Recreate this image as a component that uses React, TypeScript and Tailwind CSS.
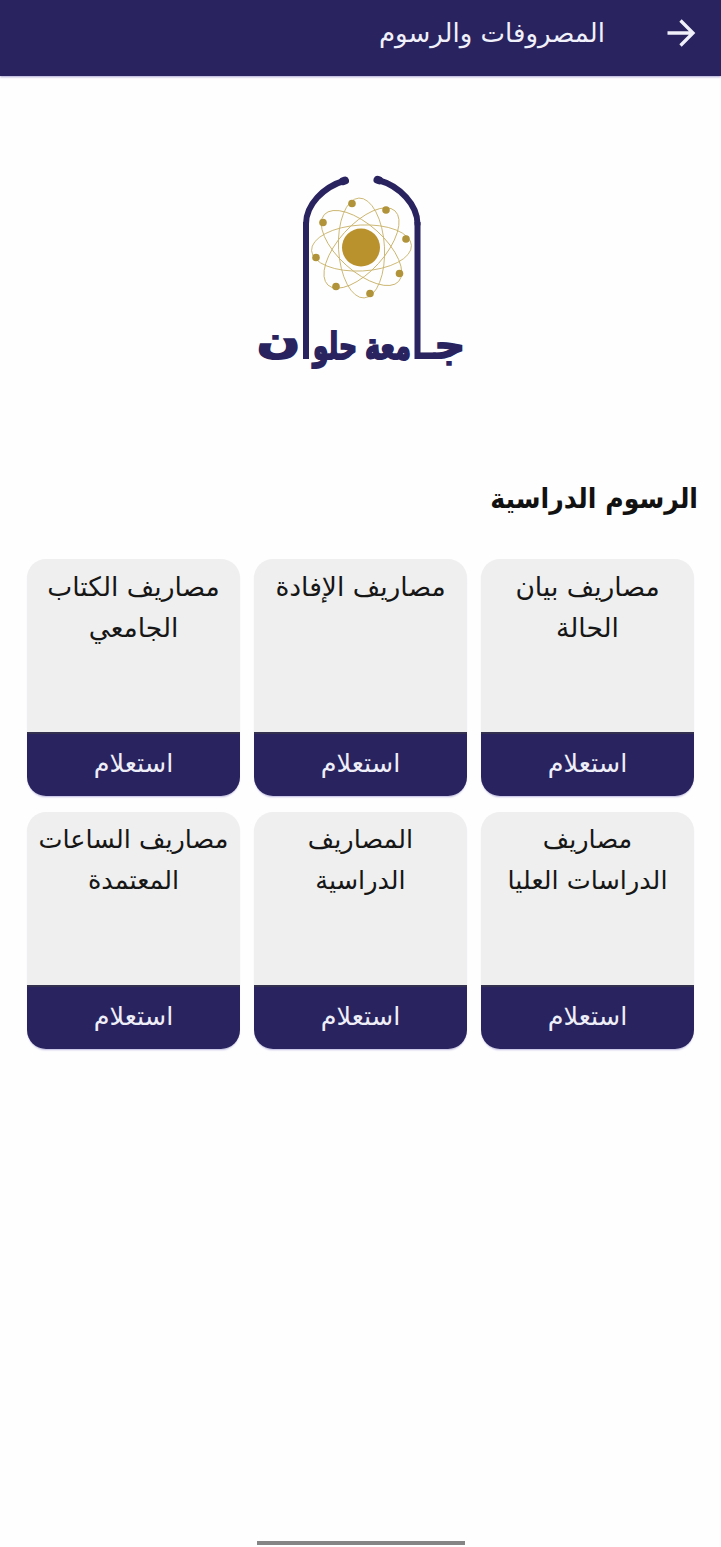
const fees = [
  { lines: ['مصاريف بيان', 'الحالة'], size: 'text-[26.5px]' },
  { lines: ['مصاريف الإفادة'], size: 'text-[26.5px]' },
  { lines: ['مصاريف الكتاب', 'الجامعي'], size: 'text-[26.5px]' },
  { lines: ['مصاريف', 'الدراسات العليا'], size: 'text-[25.5px]' },
  { lines: ['المصاريف', 'الدراسية'], size: 'text-[25.5px]' },
  { lines: ['مصاريف الساعات', 'المعتمدة'], size: 'text-[25.5px]' },
];

const electrons = [
  [352, 203.5], [386, 210], [406, 239], [399.5, 273.5],
  [370, 293.5], [336, 286.5], [316, 257.5], [323, 222.5],
];

// The two legs of the arch stand for the alifs between these groups.
const wordmark = [
  { text: 'جـ', right: 465, width: 45, y: 358 },
  { text: 'معة', right: 411, width: 46, y: 359 },
  { text: 'حلو', right: 357, width: 44, y: 359 },
  { text: 'ن', right: 300, width: 43, y: 353 },
];

function Logo() {
  return (
    <svg className="h-[210px] w-[220px]" viewBox="251 170 220 210" direction="rtl" role="img" aria-label="جامعة حلوان">
      <g fill="none" stroke="#c9b36a" strokeWidth="0.9">
        {[-3, 42, 87, 132].map((a) => (
          <ellipse key={a} cx="361.5" cy="248" rx="50" ry="23" transform={`rotate(${a} 361.5 248)`} />
        ))}
      </g>
      <circle cx="361" cy="247.5" r="19" fill="#b9922d" />
      {electrons.map(([x, y]) => (
        <circle key={x} cx={x} cy={y} r="3.8" fill="#b1933a" />
      ))}
      <g fill="none" stroke="#29235f" strokeLinecap="round">
        <path d="M345 180.5C323 187 306 205 306 224" strokeWidth="6" />
        <path d="M378 180C400 186 417.5 205 417.5 224" strokeWidth="6" />
        <path d="M306 222V359M417.5 222V359" strokeWidth="6" strokeLinecap="butt" />
        <path d="M343 181.200L345 180.500M379 180.300L377.500 179.800" strokeWidth="8" />
      </g>
      <g fill="#29235f" stroke="#29235f" strokeWidth="2" className="font-['DejaVu_Sans',sans-serif] text-[37px] font-bold">
        {wordmark.map((w) => (
          <text key={w.text} x={w.right} y={w.y} textLength={w.width} lengthAdjust="spacingAndGlyphs">
            {w.text}
          </text>
        ))}
      </g>
    </svg>
  );
}

function FeeCard({ lines, size }: { lines: string[]; size: string }) {
  return (
    <article className="flex h-[237px] flex-col overflow-hidden rounded-[19px] bg-[#efefef] shadow-[0_2px_2px_-1px_#b9b5e0]">
      <h2 className={`flex-1 pt-[7px] text-center leading-[41px] text-[#161616] ${size}`}>
        {lines.map((line) => (
          <span key={line} className="block whitespace-nowrap">{line}</span>
        ))}
      </h2>
      <button className="h-[64px] border-t-2 border-[#33304f] bg-[#29235f] pb-[3px] text-[25.5px] text-[#eeeef8]">استعلام</button>
    </article>
  );
}

export default function App() {
  return (
    <div dir="rtl" className="flex h-[1547px] w-[721px] flex-col bg-[#fefefe] font-['DejaVu_Sans',sans-serif]">
      <header className="flex h-[76px] shrink-0 items-center bg-[#29235f] pr-[25px] pb-[10px] text-[#f0f0fa] shadow-[0_1px_2px_#aaa4d4]">
        <svg className="h-[30px] w-[30px]" viewBox="0 0 30 30" fill="none" stroke="currentColor" strokeWidth="3.3">
          <path d="M1.500 15H27M14.500 2.500L27 15L14.500 27.500" />
        </svg>
        <h1 className="pr-[61px] text-[26px]">المصروفات والرسوم</h1>
      </header>
      <main className="flex flex-1 flex-col">
        <div className="flex justify-center pt-[94px]">
          <Logo />
        </div>
        <h2 className="mt-[98px] mr-[23px] origin-right scale-x-90 text-[28px] leading-[42px] font-bold text-[#111]">الرسوم الدراسية</h2>
        <section className="mt-[39px] grid grid-cols-3 gap-x-[14px] gap-y-[15.5px] px-[27px]">
          {fees.map((fee) => (
            <FeeCard key={fee.lines.join(' ')} lines={fee.lines} size={fee.size} />
          ))}
        </section>
      </main>
      <footer className="flex justify-center pb-[2px]">
        <div className="h-[4px] w-[208px] bg-[#858585]" />
      </footer>
    </div>
  );
}
